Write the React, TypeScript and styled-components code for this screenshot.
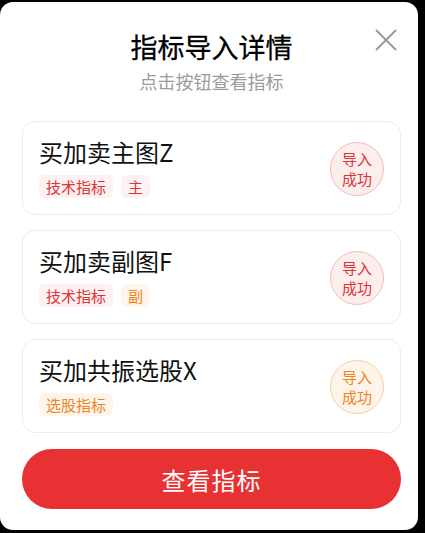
import styled, { createGlobalStyle } from 'styled-components';

type tone = 'red' | 'orange';

type indicator = {
  name: string;
  tags: { label: string; tone: tone }[];
  tone: tone;
};

const indicators: indicator[] = [
  {
    name: '买加卖主图Z',
    tags: [
      { label: '技术指标', tone: 'red' },
      { label: '主', tone: 'red' },
    ],
    tone: 'red',
  },
  {
    name: '买加卖副图F',
    tags: [
      { label: '技术指标', tone: 'red' },
      { label: '副', tone: 'orange' },
    ],
    tone: 'red',
  },
  {
    name: '买加共振选股X',
    tags: [{ label: '选股指标', tone: 'orange' }],
    tone: 'orange',
  },
];

const palette = {
  red: { text: '#dc3535', bg: '#fdf1f1', ring: '#f1bcbc', fill: '#fdeeee' },
  orange: { text: '#ec8424', bg: '#fef5ec', ring: '#f6cfa6', fill: '#fef4ea' },
};

export default function App() {
  return (
    <>
      <GlobalStyle />
      <Modal>
        <CloseButton aria-label='close'>
          <svg width='22' height='22' viewBox='0 0 22 22'>
            <path d='M1 1 L21 21 M21 1 L1 21' stroke='#9a9a9a' strokeWidth='2' fill='none' />
          </svg>
        </CloseButton>
        <header>
          <Title>指标导入详情</Title>
          <Subtitle>点击按钮查看指标</Subtitle>
        </header>
        <CardList>
          {indicators.map((item) => (
            <Card key={item.name}>
              <CardInfo>
                <CardTitle>{item.name}</CardTitle>
                <TagRow>
                  {item.tags.map((tag) => (
                    <Tag key={tag.label} $tone={tag.tone}>
                      {tag.label}
                    </Tag>
                  ))}
                </TagRow>
              </CardInfo>
              <Badge $tone={item.tone}>
                导入
                <br />
                成功
              </Badge>
            </Card>
          ))}
        </CardList>
        <ViewButton>查看指标</ViewButton>
      </Modal>
    </>
  );
}

const GlobalStyle = createGlobalStyle`
  html, body {
    margin: 0;
    padding: 0;
    background: #000;
  }
  body {
    font-family: 'Noto Sans CJK SC', 'Noto Sans', sans-serif;
  }
  * {
    box-sizing: border-box;
  }
`;

const Modal = styled.div`
  position: relative;
  width: 418px;
  height: 528px;
  margin-top: 2px;
  padding: 25px 17px 0 22px;
  background: #fff;
  border-radius: 13px;
  display: flex;
  flex-direction: column;

  header {
    display: flex;
    flex-direction: column;
    align-items: center;
  }
`;

const CloseButton = styled.div`
  position: absolute;
  top: 27px;
  right: 21px;
  width: 22px;
  height: 22px;
  display: flex;
`;

const Title = styled.h1`
  margin: 0;
  font-size: 27px;
  line-height: 40px;
  font-weight: 400;
  color: #000;
  -webkit-text-stroke: 0.3px #000;
`;

const Subtitle = styled.p`
  margin: 0;
  font-size: 18px;
  line-height: 28px;
  color: #9b9b9b;
`;

const CardList = styled.div`
  margin-top: 26px;
  display: flex;
  flex-direction: column;
  gap: 15px;
`;

const Card = styled.div`
  height: 94px;
  padding: 13px 16px 16px 16px;
  border: 1px solid #ececec;
  border-radius: 13px;
  display: flex;
  align-items: center;
  justify-content: space-between;
`;

const CardInfo = styled.div`
  display: flex;
  flex-direction: column;
  gap: 6px;
`;

const CardTitle = styled.div`
  font-size: 24px;
  line-height: 34px;
  color: #111;
`;

const TagRow = styled.div`
  display: flex;
  gap: 8px;
`;

const Tag = styled.span<{ $tone: tone }>`
  height: 23px;
  padding: 0 7px;
  border-radius: 6px;
  font-size: 15px;
  line-height: 23px;
  color: ${(p) => palette[p.$tone].text};
  background: ${(p) => palette[p.$tone].bg};
`;

const Badge = styled.div<{ $tone: tone }>`
  width: 54px;
  height: 54px;
  margin-top: 4px;
  border-radius: 50%;
  border: 1px solid ${(p) => palette[p.$tone].ring};
  background: ${(p) => palette[p.$tone].fill};
  color: ${(p) => palette[p.$tone].text};
  font-size: 15px;
  line-height: 20px;
  display: flex;
  align-items: center;
  justify-content: center;
  text-align: center;
`;

const ViewButton = styled.button`
  margin-top: 16px;
  height: 60px;
  border: none;
  border-radius: 30px;
  background: #e83133;
  color: #fff;
  font-family: inherit;
  font-size: 24px;
  letter-spacing: 1px;
`;
